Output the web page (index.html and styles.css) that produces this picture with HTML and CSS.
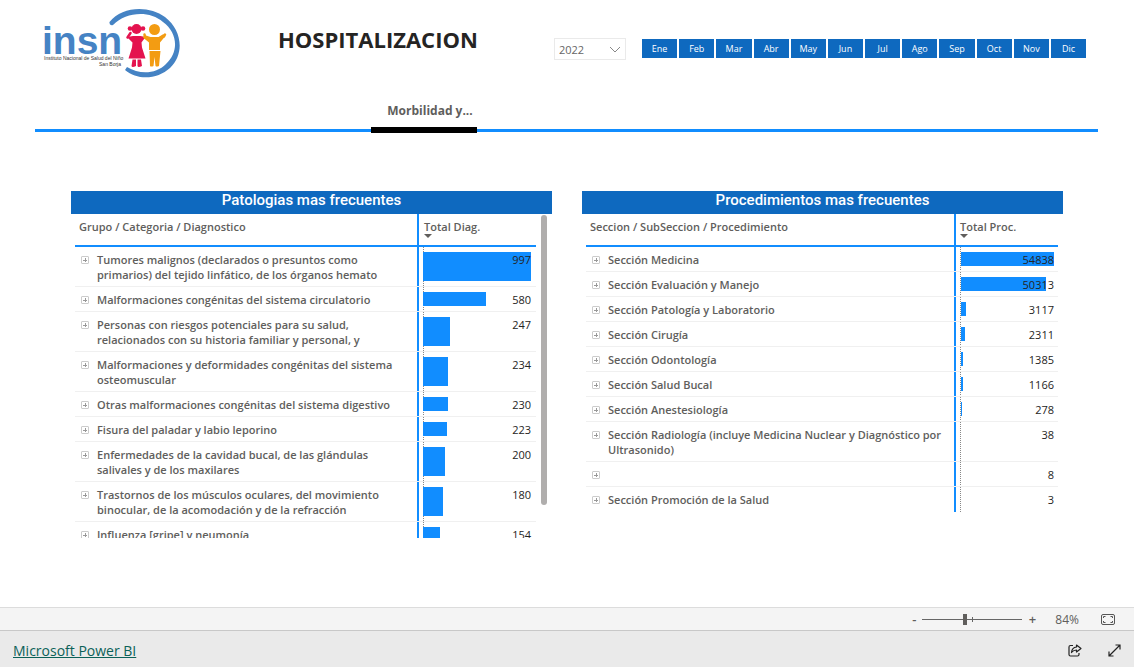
FILE: index.html
```html
<!DOCTYPE html>
<html lang="es">
<head>
<meta charset="utf-8">
<meta name="viewport" content="width=device-width, initial-scale=1">
<title>Hospitalizacion</title>
<link rel="stylesheet" href="styles.css">
</head>
<body>
<main class="report">
  <header class="top">
    <svg class="logo" viewBox="42 8 140 72" role="img" aria-label="insn">
      <path d="M109.500 22C122 6 149 5 165 17C182 30 185 54 170 68C158 79 138 81 125 70L127 67C140 75 156 74 166 64C179 52 178 33 163 22C149 10 126 12 113 25Q109 26 109.500 22Z" fill="#4583c4"/>
      <text class="logo-word" x="42" y="54">insn</text>
      <text class="logo-small" x="44" y="60">Instituto Nacional de Salud del Niño</text>
      <text class="logo-small" x="121" y="66" text-anchor="end">San Borja</text>
      <g fill="#e4134f">
        <circle cx="136.500" cy="29" r="5"/><circle cx="130" cy="28.500" r="2.300"/><circle cx="143" cy="28.500" r="2.300"/>
        <path d="M133 36h7.500l5 1-4 5.500.5 5 3.500 11h-17l3.500-11 .5-5-5.500-5.500Z"/>
        <path d="M132.500 59.500h3.500v6.500q-4 2-4.500 0ZM137.500 59.500h3.500l1 6.500q-4 2-4.500 0Z"/>
      </g>
      <path d="M127.500 37.500l3-4.500" stroke="#e4134f" stroke-width="2.500" stroke-linecap="round"/>
      <g fill="#f39c12">
        <circle cx="154.500" cy="29.500" r="5.500"/>
        <path d="M150.500 37h8l5-3 1.500 2.500-5 6v7.500h-11v-7.500l-6-5 1.500-2.500Z"/>
        <path d="M149.500 51h11l-1.500 15q-2.500 1-3.500 0l-1-9-1 9q-2.500 1-3.500 0Z"/>
      </g>
      <path d="M145 37.500l-.5-3M164 36.500l1-2" stroke="#f39c12" stroke-width="2.500" stroke-linecap="round"/>
    </svg>
    <h1 class="title">HOSPITALIZACION</h1>
    <div class="filters">
      <div class="year">
        <select class="year-select" aria-label="Año"><option>2022</option></select>
        <svg class="chevron" viewBox="0 0 12 8" aria-hidden="true"><path d="M1 1l5 5 5-5" fill="none" stroke="#888" /></svg>
      </div>
      <div class="months">
        <button class="month">Ene</button><button class="month">Feb</button><button class="month">Mar</button><button class="month">Abr</button><button class="month">May</button><button class="month">Jun</button><button class="month">Jul</button><button class="month">Ago</button><button class="month">Sep</button><button class="month">Oct</button><button class="month">Nov</button><button class="month">Dic</button>
      </div>
    </div>
  </header>
  <nav class="tabs"><button class="tab">Morbilidad y...</button></nav>

  <div class="panels">
    <section class="panel">
      <h2 class="panel-title">Patologias mas frecuentes</h2>
      <div class="panel-body">
        <div class="scroller">
          <table class="matrix diag">
            <thead><tr><th class="name">Grupo / Categoria / Diagnostico</th><th class="total">Total Diag.<span class="sort"></span></th></tr></thead>
            <tbody>
              <tr><td class="name"><button class="plus" aria-label="Expandir"></button>Tumores malignos (declarados o presuntos como primarios) del tejido linfático, de los órganos hemato</td><td class="value"><span class="track"><span class="bar" style="width:100%"></span></span><span class="num">997</span></td></tr>
              <tr><td class="name"><button class="plus" aria-label="Expandir"></button>Malformaciones congénitas del sistema circulatorio</td><td class="value"><span class="track"><span class="bar" style="width:58.2%"></span></span><span class="num">580</span></td></tr>
              <tr><td class="name"><button class="plus" aria-label="Expandir"></button>Personas con riesgos potenciales para su salud, relacionados con su historia familiar y personal, y</td><td class="value"><span class="track"><span class="bar" style="width:24.8%"></span></span><span class="num">247</span></td></tr>
              <tr><td class="name"><button class="plus" aria-label="Expandir"></button>Malformaciones y deformidades congénitas del sistema osteomuscular</td><td class="value"><span class="track"><span class="bar" style="width:23.5%"></span></span><span class="num">234</span></td></tr>
              <tr><td class="name"><button class="plus" aria-label="Expandir"></button>Otras malformaciones congénitas del sistema digestivo</td><td class="value"><span class="track"><span class="bar" style="width:23.1%"></span></span><span class="num">230</span></td></tr>
              <tr><td class="name"><button class="plus" aria-label="Expandir"></button>Fisura del paladar y labio leporino</td><td class="value"><span class="track"><span class="bar" style="width:22.4%"></span></span><span class="num">223</span></td></tr>
              <tr><td class="name"><button class="plus" aria-label="Expandir"></button>Enfermedades de la cavidad bucal, de las glándulas salivales y de los maxilares</td><td class="value"><span class="track"><span class="bar" style="width:20.1%"></span></span><span class="num">200</span></td></tr>
              <tr><td class="name"><button class="plus" aria-label="Expandir"></button>Trastornos de los músculos oculares, del movimiento binocular, de la acomodación y de la refracción</td><td class="value"><span class="track"><span class="bar" style="width:18.1%"></span></span><span class="num">180</span></td></tr>
              <tr><td class="name"><button class="plus" aria-label="Expandir"></button>Influenza [gripe] y neumonía</td><td class="value"><span class="track"><span class="bar" style="width:15.4%"></span></span><span class="num">154</span></td></tr>
            </tbody>
          </table>
        </div>
        <div class="scrollbar"><div class="scroll-thumb"></div></div>
      </div>
    </section>

    <section class="panel">
      <h2 class="panel-title">Procedimientos mas frecuentes</h2>
      <div class="panel-body">
        <div class="scroller">
          <table class="matrix proc">
            <thead><tr><th class="name">Seccion / SubSeccion / Procedimiento</th><th class="total">Total Proc.<span class="sort"></span></th></tr></thead>
            <tbody>
              <tr><td class="name"><button class="plus" aria-label="Expandir"></button>Sección Medicina</td><td class="value"><span class="track"><span class="bar" style="width:100%"></span></span><span class="num">54838</span></td></tr>
              <tr><td class="name"><button class="plus" aria-label="Expandir"></button>Sección Evaluación y Manejo</td><td class="value"><span class="track"><span class="bar" style="width:91.7%"></span></span><span class="num">50313</span></td></tr>
              <tr><td class="name"><button class="plus" aria-label="Expandir"></button>Sección Patología y Laboratorio</td><td class="value"><span class="track"><span class="bar" style="width:5.7%"></span></span><span class="num">3117</span></td></tr>
              <tr><td class="name"><button class="plus" aria-label="Expandir"></button>Sección Cirugía</td><td class="value"><span class="track"><span class="bar" style="width:4.2%"></span></span><span class="num">2311</span></td></tr>
              <tr><td class="name"><button class="plus" aria-label="Expandir"></button>Sección Odontología</td><td class="value"><span class="track"><span class="bar" style="width:2.5%"></span></span><span class="num">1385</span></td></tr>
              <tr><td class="name"><button class="plus" aria-label="Expandir"></button>Sección Salud Bucal</td><td class="value"><span class="track"><span class="bar" style="width:2.1%"></span></span><span class="num">1166</span></td></tr>
              <tr><td class="name"><button class="plus" aria-label="Expandir"></button>Sección Anestesiología</td><td class="value"><span class="track"><span class="bar" style="width:0.5%"></span></span><span class="num">278</span></td></tr>
              <tr><td class="name"><button class="plus" aria-label="Expandir"></button>Sección Radiología (incluye Medicina Nuclear y Diagnóstico por Ultrasonido)</td><td class="value"><span class="num">38</span></td></tr>
              <tr><td class="name"><button class="plus" aria-label="Expandir"></button></td><td class="value"><span class="num">8</span></td></tr>
              <tr><td class="name"><button class="plus" aria-label="Expandir"></button>Sección Promoción de la Salud</td><td class="value"><span class="num">3</span></td></tr>
            </tbody>
          </table>
        </div>
      </div>
    </section>
  </div>
</main>

<div class="zoombar">
  <button class="zoom-btn">-</button>
  <input class="zoom-range" type="range" min="0" max="100" value="42" aria-label="Zoom">
  <button class="zoom-btn">+</button>
  <span class="zoom-value">84%</span>
  <button class="icon-btn" aria-label="Ajustar a la página">
    <svg width="14" height="11" viewBox="0 0 14 11" fill="none" stroke="#555"><rect x=".5" y=".5" width="13" height="10" rx="1.500"/><path d="M2.500 4V2.500H4.500M9.500 2.500h2V4M2.500 7v1.500h2M9.500 8.500h2V7"/></svg>
  </button>
</div>
<footer class="footer">
  <a class="brand" href="#">Microsoft Power BI</a>
  <div class="actions">
    <button class="icon-btn" aria-label="Compartir">
      <svg width="14" height="13" viewBox="0 0 14 13" fill="none" stroke="#222" stroke-width="1.200" stroke-linejoin="round"><path d="M5 1.500H2.500Q1 1.500 1 3v7.500Q1 12 2.500 12h7q1.500 0 1.500-1.500V9"/><path d="M8.500 1l4.500 3.500L8.500 8V6Q5.500 6 3.500 8.500Q4 3.500 8.500 3Z"/></svg>
    </button>
    <button class="icon-btn" aria-label="Pantalla completa">
      <svg width="13" height="13" viewBox="0 0 13 13" fill="none" stroke="#222" stroke-width="1.200"><path d="M1 12L12 1M7.500 1H12v4.500M1 7.500V12h4.500"/></svg>
    </button>
  </div>
</footer>
</body>
</html>
```

FILE: styles.css
```css
* { box-sizing: border-box; }

body {
  margin: 0;
  min-height: 100vh;
  display: flex;
  flex-direction: column;
  background: #fff;
  color: #605e5c;
  font: 11px/15px "Open Sans", "Noto Sans", sans-serif;
}

button, select {
  font: inherit;
  color: inherit;
  padding: 0;
  border: 0;
  background: none;
}

.report { flex: 1; }

.top {
  display: flex;
  align-items: flex-start;
  padding: 8px 48px 0 42px;
}
.logo { width: 140px; height: 72px; flex: none; }
.logo-word { font: bold 39px "Liberation Sans", sans-serif; fill: #4583c4; }
.logo-small { font: 5px "Liberation Sans", sans-serif; fill: #333; }
.title {
  margin: 16px 0 0 96px;
  font-size: 22px;
  line-height: 30px;
  font-weight: 700;
  color: #252423;
}
.filters {
  display: flex;
  align-items: flex-start;
  gap: 16px;
  margin: 30px 0 0 auto;
}
.year { position: relative; width: 72px; }
.year-select {
  appearance: none;
  display: block;
  width: 100%;
  height: 22px;
  padding-left: 4px;
  border: 1px solid #eaeaea;
  background: #fff;
  color: #666;
}
.chevron {
  position: absolute;
  right: 5px;
  top: 8px;
  width: 12px;
  height: 8px;
  pointer-events: none;
}
.months { display: flex; gap: 2px; width: 444px; padding-top: 1px; }
.month {
  flex: 1;
  height: 19px;
  background: #0e69bf;
  color: #fff;
  font-size: 9px;
}

.tabs {
  display: flex;
  margin: 22px 36px 0 35px;
  padding-left: 336px;
  background: linear-gradient(#118dff, #118dff) 0 27px / 100% 3px no-repeat;
}
.tab {
  width: 106px;
  height: 31px;
  padding: 0 0 8px 12px;
  border-bottom: 6px solid #000;
  font-size: 12px;
  font-weight: 700;
}

.panels {
  display: grid;
  grid-template-columns: 1fr 1fr;
  gap: 30px;
  padding: 58px 71px 0;
}
.panel-title {
  margin: 0;
  height: 23px;
  background: #0e69bf;
  color: #fff;
  font: 500 15px/19px Roboto, sans-serif;
  text-align: center;
}
.panel-body { display: flex; gap: 5px; padding: 0 5px 0 4px; }
.scroller { flex: 1; max-height: 324px; overflow: hidden; }
.scrollbar { width: 6px; padding-top: 1px; }
.scroll-thumb { height: 290px; border-radius: 3px; background: #b0aead; }

.matrix {
  width: 100%;
  table-layout: fixed;
  border-spacing: 0;
}
.matrix th {
  height: 33px;
  padding: 5px 4px 0;
  border-bottom: 2px solid #118dff;
  text-align: left;
  vertical-align: top;
  font-weight: 600;
}
.matrix td {
  padding: 5px 4px 4px;
  border-bottom: 1px solid #f0f0f0;
  vertical-align: top;
}
.matrix tbody tr:last-child td { border-bottom: 0; }
.matrix .name {
  font-weight: 600;
  background: linear-gradient(#118dff, #118dff) right / 2px 100% no-repeat border-box;
}
.matrix td.name { position: relative; padding: 5px 20px 4px 22px; height: 25px; }
.proc td.name { padding-right: 6px; }
.diag .total { width: 117px; padding-left: 5px; }
.proc .total { width: 102px; }
.sort {
  display: block;
  width: 0;
  border: 4px solid transparent;
  border-top-color: #605e5c;
  border-bottom: 0;
}
.plus {
  position: absolute;
  left: 6px;
  top: 9px;
  width: 8px;
  height: 8px;
  border: 1px solid #ccc;
  border-radius: 1px;
  background:
    linear-gradient(#999, #999) center / 4px 1px no-repeat,
    linear-gradient(#999, #999) center / 1px 4px no-repeat;
}
.matrix .value {
  position: relative;
  text-align: right;
  color: #252423;
  background: repeating-linear-gradient(#888 0 1px, #fff 1px 2px) 4px 0 / 1px 100% no-repeat;
}
.matrix.diag .value { padding-right: 5px; }
.track { position: absolute; inset: 5px 4px 5px 5px; }
.diag .track { left: 4px; right: 5px; }
.bar { display: block; height: 100%; background: #118dff; }
.num { position: relative; }

.zoombar {
  display: flex;
  align-items: center;
  justify-content: flex-end;
  height: 23px;
  padding-right: 19px;
  border-top: 1px solid #dcdcdc;
  background: #f4f4f4;
}
.zoom-btn { width: 8px; font-size: 13px; font-weight: 600; }
.zoom-range {
  appearance: none;
  width: 100px;
  height: 12px;
  margin: 0 6px 0 4px;
  background:
    linear-gradient(#666, #666) 0 6px / 100% 1px no-repeat,
    linear-gradient(#666, #666) 50px 4px / 1px 5px no-repeat;
}
.zoom-range::-webkit-slider-thumb {
  appearance: none;
  width: 4px;
  height: 11px;
  background: #605e5c;
}
.zoom-value { margin: 0 22px 0 19px; font-size: 12px; }
.icon-btn { display: flex; }
.footer {
  display: flex;
  align-items: center;
  justify-content: space-between;
  height: 37px;
  padding: 3px 13px 0;
  border-top: 1px solid #c8c8c8;
  background: #eaeaea;
}
.brand { color: #0b6158; font-size: 14px; line-height: 20px; }
.actions { display: flex; gap: 26px; }
```
